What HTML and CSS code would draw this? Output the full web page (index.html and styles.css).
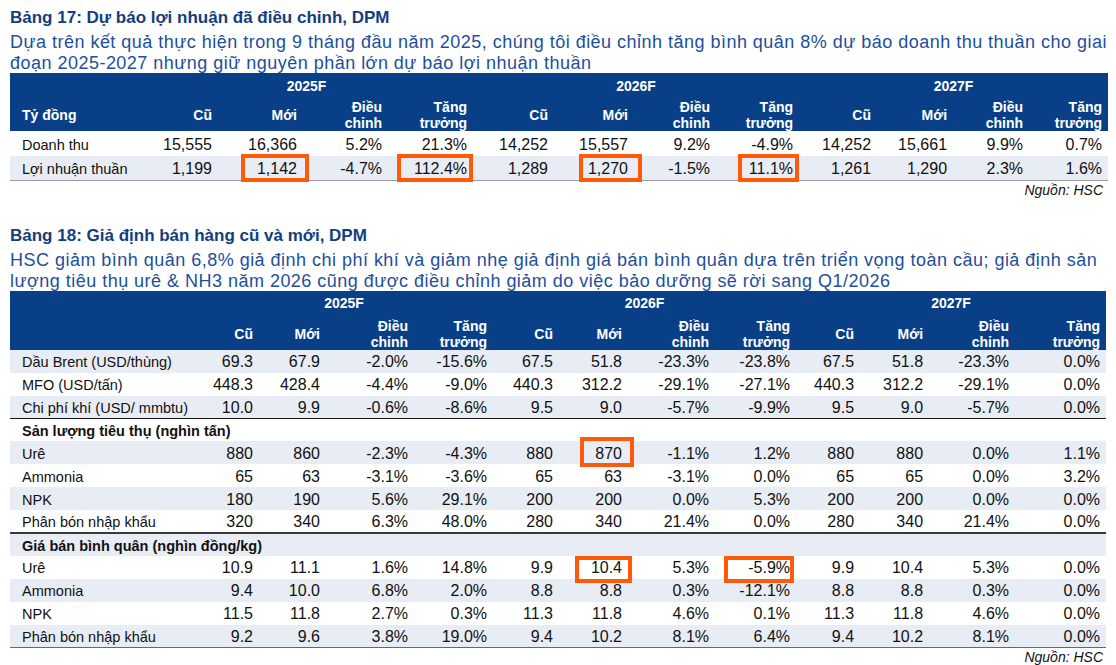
FILE: index.html
```html
<!DOCTYPE html>
<html lang="vi">
<head>
<meta charset="utf-8">
<title>DPM</title>
<link rel="stylesheet" href="styles.css">
</head>
<body>
<div class="page">
  <section class="exhibit ex1">
    <h2 class="ex-title">Bảng 17: Dự báo lợi nhuận đã điều chỉnh, DPM</h2>
    <p class="ex-sub">Dựa trên kết quả thực hiện trong 9 tháng đầu năm 2025, chúng tôi điều chỉnh tăng bình quân 8% dự báo doanh thu thuần cho giai<br>đoạn 2025-2027 nhưng giữ nguyên phần lớn dự báo lợi nhuận thuần</p>
    <table class="tbl t1">
      <colgroup>
        <col class="c-lbl1">
        <col class="c78"><col class="c85"><col class="c85"><col class="c85">
        <col class="c81"><col class="c80"><col class="c82"><col class="c83">
        <col class="c78"><col class="c76"><col class="c76"><col class="c79">
      </colgroup>
      <thead>
        <tr class="yr">
          <th></th><th colspan="4">2025F</th><th colspan="4">2026F</th><th colspan="4">2027F</th>
        </tr>
        <tr class="sub">
          <th class="lbl">Tỷ đồng</th>
          <th>Cũ</th><th>Mới</th><th>Điều<br>chỉnh</th><th>Tăng<br>trưởng</th>
          <th>Cũ</th><th>Mới</th><th>Điều<br>chỉnh</th><th>Tăng<br>trưởng</th>
          <th>Cũ</th><th>Mới</th><th>Điều<br>chỉnh</th><th>Tăng<br>trưởng</th>
        </tr>
      </thead>
      <tbody>
        <tr class="first">
          <td class="lbl">Doanh thu</td>
          <td>15,555</td><td>16,366</td><td>5.2%</td><td>21.3%</td>
          <td>14,252</td><td>15,557</td><td>9.2%</td><td>-4.9%</td>
          <td>14,252</td><td>15,661</td><td>9.9%</td><td>0.7%</td>
        </tr>
        <tr class="alt last">
          <td class="lbl">Lợi nhuận thuần</td>
          <td>1,199</td><td class="hl hl-a">1,142</td><td>-4.7%</td><td class="hl hl-b">112.4%</td>
          <td>1,289</td><td class="hl hl-c">1,270</td><td>-1.5%</td><td class="hl hl-d">11.1%</td>
          <td>1,261</td><td>1,290</td><td>2.3%</td><td>1.6%</td>
        </tr>
      </tbody>
    </table>
    <div class="src">Nguồn: HSC</div>
  </section>

  <section class="exhibit ex2">
    <h2 class="ex-title">Bảng 18: Giả định bán hàng cũ và mới, DPM</h2>
    <p class="ex-sub">HSC giảm bình quân 6,8% giả định chi phí khí và giảm nhẹ giả định giá bán bình quân dựa trên triển vọng toàn cầu; giả định sản<br>lượng tiêu thụ urê &amp; NH3 năm 2026 cũng được điều chỉnh giảm do việc bảo dưỡng sẽ rời sang Q1/2026</p>
    <table class="tbl t2">
      <colgroup>
        <col class="c-lbl2">
        <col class="c64"><col class="c67"><col class="c88"><col class="c79">
        <col class="c66"><col class="c69"><col class="c87"><col class="c81">
        <col class="c64"><col class="c69"><col class="c86"><col class="c91">
      </colgroup>
      <thead>
        <tr class="yr">
          <th></th><th colspan="4">2025F</th><th colspan="4">2026F</th><th colspan="4">2027F</th>
        </tr>
        <tr class="sub">
          <th class="lbl"></th>
          <th>Cũ</th><th>Mới</th><th>Điều<br>chỉnh</th><th>Tăng<br>trưởng</th>
          <th>Cũ</th><th>Mới</th><th>Điều<br>chỉnh</th><th>Tăng<br>trưởng</th>
          <th>Cũ</th><th>Mới</th><th>Điều<br>chỉnh</th><th>Tăng<br>trưởng</th>
        </tr>
      </thead>
      <tbody>
        <tr class="alt">
          <td class="lbl">Dầu Brent (USD/thùng)</td>
          <td>69.3</td><td>67.9</td><td>-2.0%</td><td>-15.6%</td>
          <td>67.5</td><td>51.8</td><td>-23.3%</td><td>-23.8%</td>
          <td>67.5</td><td>51.8</td><td>-23.3%</td><td>0.0%</td>
        </tr>
        <tr>
          <td class="lbl">MFO (USD/tấn)</td>
          <td>448.3</td><td>428.4</td><td>-4.4%</td><td>-9.0%</td>
          <td>440.3</td><td>312.2</td><td>-29.1%</td><td>-27.1%</td>
          <td>440.3</td><td>312.2</td><td>-29.1%</td><td>0.0%</td>
        </tr>
        <tr class="alt rule-dark">
          <td class="lbl">Chi phí khí (USD/ mmbtu)</td>
          <td>10.0</td><td>9.9</td><td>-0.6%</td><td>-8.6%</td>
          <td>9.5</td><td>9.0</td><td>-5.7%</td><td>-9.9%</td>
          <td>9.5</td><td>9.0</td><td>-5.7%</td><td>0.0%</td>
        </tr>
        <tr class="sect">
          <td class="lbl" colspan="13">Sản lượng tiêu thụ (nghìn tấn)</td>
        </tr>
        <tr class="alt">
          <td class="lbl">Urê</td>
          <td>880</td><td>860</td><td>-2.3%</td><td>-4.3%</td>
          <td>880</td><td class="hl hl-e">870</td><td>-1.1%</td><td>1.2%</td>
          <td>880</td><td>880</td><td>0.0%</td><td>1.1%</td>
        </tr>
        <tr>
          <td class="lbl">Ammonia</td>
          <td>65</td><td>63</td><td>-3.1%</td><td>-3.6%</td>
          <td>65</td><td>63</td><td>-3.1%</td><td>0.0%</td>
          <td>65</td><td>65</td><td>0.0%</td><td>3.2%</td>
        </tr>
        <tr class="alt">
          <td class="lbl">NPK</td>
          <td>180</td><td>190</td><td>5.6%</td><td>29.1%</td>
          <td>200</td><td>200</td><td>0.0%</td><td>5.3%</td>
          <td>200</td><td>200</td><td>0.0%</td><td>0.0%</td>
        </tr>
        <tr class="rule-gray">
          <td class="lbl">Phân bón nhập khẩu</td>
          <td>320</td><td>340</td><td>6.3%</td><td>48.0%</td>
          <td>280</td><td>340</td><td>21.4%</td><td>0.0%</td>
          <td>280</td><td>340</td><td>21.4%</td><td>0.0%</td>
        </tr>
        <tr class="sect alt">
          <td class="lbl" colspan="13">Giá bán bình quân (nghìn đồng/kg)</td>
        </tr>
        <tr>
          <td class="lbl">Urê</td>
          <td>10.9</td><td>11.1</td><td>1.6%</td><td>14.8%</td>
          <td>9.9</td><td class="hl hl-f">10.4</td><td>5.3%</td><td class="hl hl-g">-5.9%</td>
          <td>9.9</td><td>10.4</td><td>5.3%</td><td>0.0%</td>
        </tr>
        <tr class="alt">
          <td class="lbl">Ammonia</td>
          <td>9.4</td><td>10.0</td><td>6.8%</td><td>2.0%</td>
          <td>8.8</td><td>8.8</td><td>0.3%</td><td>-12.1%</td>
          <td>8.8</td><td>8.8</td><td>0.3%</td><td>0.0%</td>
        </tr>
        <tr>
          <td class="lbl">NPK</td>
          <td>11.5</td><td>11.8</td><td>2.7%</td><td>0.3%</td>
          <td>11.3</td><td>11.8</td><td>4.6%</td><td>0.1%</td>
          <td>11.3</td><td>11.8</td><td>4.6%</td><td>0.0%</td>
        </tr>
        <tr class="alt last">
          <td class="lbl">Phân bón nhập khẩu</td>
          <td>9.2</td><td>9.6</td><td>3.8%</td><td>19.0%</td>
          <td>9.4</td><td>10.2</td><td>8.1%</td><td>6.4%</td>
          <td>9.4</td><td>10.2</td><td>8.1%</td><td>0.0%</td>
        </tr>
      </tbody>
    </table>
    <div class="src">Nguồn: HSC</div>
  </section>
</div>
</body>
</html>
```

FILE: styles.css
```css
* { box-sizing: border-box; }

html, body {
  margin: 0;
  padding: 0;
  background: #ffffff;
}

body {
  font-family: "Liberation Sans", Arial, sans-serif;
  color: #111111;
}

.page {
  width: 1116px;
  padding: 7px 8px 0 10px;
}

.ex-title {
  margin: 0;
  font-size: 17px;
  line-height: 21px;
  font-weight: bold;
  color: #123e80;
}

.ex-sub {
  margin: 4px 0 -1px 0;
  font-size: 18px;
  line-height: 21px;
  letter-spacing: 0.48px;
  color: #1d4f9c;
  white-space: nowrap;
}

.tbl {
  border-collapse: collapse;
  table-layout: fixed;
}

.t1 { width: 1098px; }
.t2 { width: 1096px; }

.c-lbl1 { width: 130px; }
.c-lbl2 { width: 185px; }
.c64 { width: 64px; }
.c66 { width: 66px; }
.c67 { width: 67px; }
.c69 { width: 69px; }
.c76 { width: 76px; }
.c78 { width: 78px; }
.c79 { width: 79px; }
.c80 { width: 80px; }
.c81 { width: 81px; }
.c82 { width: 82px; }
.c83 { width: 83px; }
.c85 { width: 85px; }
.c86 { width: 86px; }
.c87 { width: 87px; }
.c88 { width: 88px; }
.c91 { width: 91px; }

.tbl thead th {
  background: #083f87;
  color: #ffffff;
  font-weight: bold;
  font-size: 14px;
  line-height: 16px;
  padding: 2px 6px 0 0;
  text-align: right;
  vertical-align: middle;
}

.tbl thead tr.yr th {
  text-align: center;
  padding: 1px 0 0 0;
}

.t1 thead tr.yr { height: 24px; }
.t1 thead tr.sub { height: 34px; }
.t2 thead tr.yr { height: 23px; }
.t2 thead tr.sub { height: 33px; }
.t2 thead tr.sub th { padding-top: 4px; }
.t2 thead tr.yr th { padding-top: 2px; }

.tbl thead th.lbl {
  text-align: left;
  padding-left: 12px;
}

.tbl td {
  font-size: 16px;
  text-align: right;
  padding: 2px 6px 0 0;
  vertical-align: middle;
  white-space: nowrap;
}

.tbl td.lbl {
  font-size: 14.5px;
  text-align: left;
  padding-left: 12px;
}

.t1 tbody tr { height: 24px; }
.t1 tbody tr.first { height: 25px; }
.t1 tbody tr.first td { padding-top: 3px; }
.t2 tbody tr { height: 23px; }
.t2 tbody tr.sect { height: 22.5px; }

.tbl tr.alt td { background: #e8ecf4; }

.t1 tr.last td { border-bottom: 1.5px solid #9a9a9a; }
.t2 tr.last td { border-bottom: 1.5px solid #4d6c98; }
.t2 tr.rule-dark td { border-bottom: 1.5px solid #1a1a1a; }
.t2 tr.rule-gray td { border-bottom: 2px solid #3a3a3a; }

.t2 tr.sect td.lbl {
  font-weight: bold;
  font-size: 14.5px;
}

.hl { position: relative; }
.hl::after {
  content: "";
  position: absolute;
  border: 4px solid #ff5a0a;
  pointer-events: none;
}
.hl-a::after { left: 23px; right: -6px; top: -2px; bottom: -2px; }
.hl-b::after { left: 9px; right: 0; top: -2px; bottom: -2px; }
.hl-c::after { left: 25px; right: -8px; top: -2px; bottom: -2px; }
.hl-d::after { left: 22px; right: 0; top: -2px; bottom: -2px; }
.hl-e::after { left: 21px; right: -6px; top: -4px; bottom: -3px; }
.hl-f::after { left: 16px; right: -4px; top: 0; bottom: -4px; }
.hl-g::after { left: 9px; right: 2px; top: 0; bottom: -4px; }

.src {
  width: 1098px;
  text-align: right;
  padding-right: 5px;
  font-style: italic;
  font-size: 14px;
  line-height: 15px;
  margin-top: 2px;
}

.ex2 { margin-top: 27px; }
```
